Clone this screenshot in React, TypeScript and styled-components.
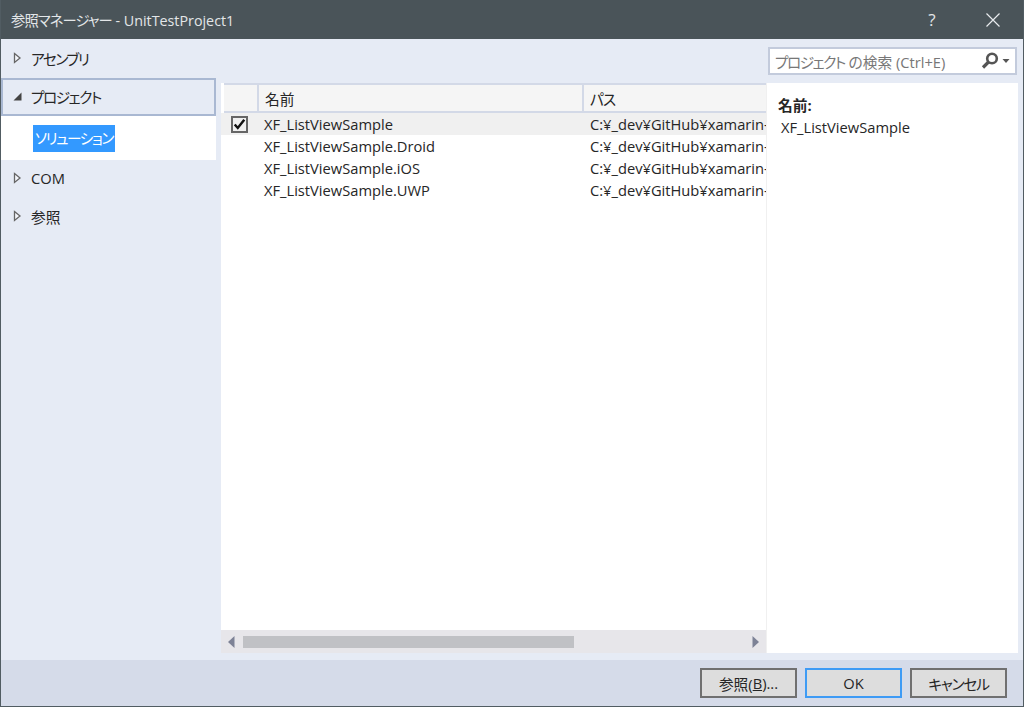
import React from "react";
import styled, { createGlobalStyle } from "styled-components";

const GlobalStyle = createGlobalStyle`
    html, body {
        margin: 0;
        padding: 0;
        height: 100%;
        overflow: hidden;
    }
    body {
        font-family: "Open Sans", "Noto Sans CJK JP", sans-serif;
        font-size: 14.7px;
        font-feature-settings: "palt";
        color: #262626;
    }
`;

const projects = ["XF_ListViewSample", "XF_ListViewSample.Droid", "XF_ListViewSample.iOS", "XF_ListViewSample.UWP"];
const PATH = "C:¥_dev¥GitHub¥xamarin-";

const Arrow = ({ open }: { open?: boolean }) => (
    <ArrowBox>
        {open ? (
            <svg width="10" height="10" viewBox="0 0 10 10"><path d="M9.5 1.5V9.5H1.5Z" fill="#444" /></svg>
        ) : (
            <svg width="10" height="12" viewBox="0 0 10 12"><path d="M2.5 1.5L8 6L2.5 10.5Z" fill="#f4f6fb" stroke="#666" strokeWidth="1.3" /></svg>
        )}
    </ArrowBox>
);

export default function App() {
    return <Win>
        <GlobalStyle />
        <TitleBar>
            <Title><Kana $s={-0.9}>参照マネージャー</Kana> - UnitTestProject1</Title>
            <Help>?</Help>
            <CloseBtn>
                <svg width="16" height="16" viewBox="0 0 16 16"><path d="M1.5 1.5L14.5 14.5M14.5 1.5L1.5 14.5" stroke="#e8ebee" strokeWidth="1.2" /></svg>
            </CloseBtn>
        </TitleBar>

        <Body>
            <Side>
                <SideItem><Arrow /><Kana>アセンブリ</Kana></SideItem>
                <SideItem $active><Arrow open /><Kana>プロジェクト</Kana></SideItem>
                <SubPanel><Selected><Kana>ソリューション</Kana></Selected></SubPanel>
                <SideItem><Arrow /><span>COM</span></SideItem>
                <SideItem><Arrow /><span>参照</span></SideItem>
            </Side>

            <Main>
                <SearchRow>
                    <SearchBox>
                        <SearchText><Kana>プロジェクト</Kana> の検索 (Ctrl+E)</SearchText>
                        <svg width="20" height="18" viewBox="0 0 20 18">
                            <circle cx="12" cy="6.5" r="4.8" fill="none" stroke="#555" strokeWidth="2.6" />
                            <path d="M8.5 10L3 15.5" stroke="#555" strokeWidth="3.2" />
                        </svg>
                        <svg width="9" height="6" viewBox="0 0 9 6"><path d="M0.5 1H7.5L4 5Z" fill="#555" /></svg>
                    </SearchBox>
                </SearchRow>

                <Content>
                    <ListPane>
                        <ListArea>
                            <HeaderRow>
                                <HeadCell $w={35} />
                                <HeadCell $w={325}>名前</HeadCell>
                                <HeadCell $w={183}><Kana $s={-0.8}>パス</Kana></HeadCell>
                            </HeaderRow>
                            {projects.map((name, i) => (
                                <Row key={name} $on={i === 0}>
                                    <CheckCell>
                                        {i === 0 && <Check>
                                            <svg width="15" height="13" viewBox="0 0 15 13"><path d="M2 6.5L5.5 10.5L13 1" fill="none" stroke="#111" strokeWidth="2.8" /></svg>
                                        </Check>}
                                    </CheckCell>
                                    <NameCell>{name}</NameCell>
                                    <PathCell>{PATH}</PathCell>
                                </Row>
                            ))}
                        </ListArea>
                        <ScrollBar>
                            <svg width="7" height="12" viewBox="0 0 7 12"><path d="M6.5 0V12L0 6Z" fill="#7d8296" /></svg>
                            <Track><Thumb /></Track>
                            <svg width="7" height="12" viewBox="0 0 7 12"><path d="M0.5 0V12L7 6Z" fill="#7d8296" /></svg>
                        </ScrollBar>
                    </ListPane>
                    <Detail>
                        <DetailLabel>名前:</DetailLabel>
                        <DetailValue>XF_ListViewSample</DetailValue>
                    </Detail>
                </Content>
            </Main>
        </Body>

        <Footer>
            <Btn>参照(<u>B</u>)...</Btn>
            <Btn $primary>OK</Btn>
            <Btn><Kana $s={-1.2}>キャンセル</Kana></Btn>
        </Footer>
    </Win>;
}

const Kana = styled.span<{ $s?: number }>`
    letter-spacing: ${p => p.$s ?? -1.5}px;
`;

const Win = styled.div`
    width: 1024px;
    height: 707px;
    box-sizing: border-box;
    display: flex;
    flex-direction: column;
    border: 1px solid #515c62;
    border-top: 0;
    background: #e6ebf5;
`;

const TitleBar = styled.div`
    height: 39px;
    flex: none;
    display: flex;
    align-items: center;
    background: #4a5459;
    color: #e3e6e8;
    padding-left: 10px;
`;

const Title = styled.div`
    flex: 1;
    font-size: 14.3px;
`;

const Help = styled.div`
    width: 30px;
    margin-right: 38px;
    text-align: center;
    font-size: 17px;
`;

const CloseBtn = styled.div`
    width: 16px;
    height: 16px;
    margin-right: 22px;
    line-height: 0;
`;

const Body = styled.div`
    flex: 1;
    display: flex;
    min-height: 0;
`;

const Side = styled.div`
    width: 215px;
    flex: none;
    padding-top: 1px;
`;

const SideItem = styled.div<{ $active?: boolean }>`
    height: 38px;
    box-sizing: border-box;
    display: flex;
    align-items: center;
    padding-left: ${p => (p.$active ? 9 : 11)}px;
    padding-bottom: 2px;
    border: ${p => (p.$active ? "2px solid #a9b8d2" : "0")};
`;

const ArrowBox = styled.div`
    width: 19px;
    display: flex;
    line-height: 0;
`;

const SubPanel = styled.div`
    height: 44px;
    background: #fff;
    display: flex;
    align-items: center;
    padding-left: 32px;
`;

const Selected = styled.div`
    background: #3399ff;
    color: #fff;
    height: 27px;
    line-height: 27px;
    padding: 0 2px;
`;

const Main = styled.div`
    flex: 1;
    display: flex;
    flex-direction: column;
    min-width: 0;
    padding: 8px 5px 7px 5px;
`;

const SearchRow = styled.div`
    display: flex;
    justify-content: flex-end;
    height: 36px;
    flex: none;
    padding-right: 1px;
`;

const SearchBox = styled.div`
    width: 249px;
    height: 28px;
    box-sizing: border-box;
    border: 2px solid #c3cbdc;
    background: #fff;
    display: flex;
    align-items: center;
    padding: 0 4px 0 5px;
    gap: 2px;
`;

const SearchText = styled.div`
    flex: 1;
    color: #777;
    white-space: nowrap;
`;

const Content = styled.div`
    flex: 1;
    display: flex;
    min-height: 0;
`;

const ListPane = styled.div`
    width: 545px;
    flex: none;
    display: flex;
    flex-direction: column;
    background: #fff;
`;

const ListArea = styled.div`
    flex: 1;
    overflow: hidden;
    min-height: 0;
`;

const HeaderRow = styled.div`
    display: flex;
    height: 30px;
    box-sizing: border-box;
    margin-left: 3px;
    background: #f5f5f5;
    border-top: 2px solid #d3d9e7;
    border-bottom: 2px solid #d3d9e7;
`;

const HeadCell = styled.div<{ $w: number }>`
    width: ${p => p.$w}px;
    flex: none;
    box-sizing: border-box;
    padding-left: 6px;
    line-height: 28px;
    border-right: 2px solid #d3d9e7;
    &:last-child { border-right: 0; flex: 1; }
`;

const Row = styled.div<{ $on?: boolean }>`
    display: flex;
    align-items: center;
    height: 22px;
    white-space: nowrap;
    background: ${p => (p.$on ? "#f0f0f0" : "#fff")};
`;

const CheckCell = styled.div`
    width: 43px;
    flex: none;
    padding-left: 10px;
    box-sizing: border-box;
`;

const Check = styled.div`
    width: 17px;
    height: 17px;
    box-sizing: border-box;
    border: 2px solid #666;
    display: flex;
    align-items: center;
    justify-content: center;
`;

const NameCell = styled.div`
    width: 326px;
    flex: none;
`;

const PathCell = styled.div`
    flex: 1;
    overflow: hidden;
`;

const ScrollBar = styled.div`
    height: 23px;
    flex: none;
    display: flex;
    align-items: center;
    padding: 0 7px;
    background: #e7e6ea;
`;

const Track = styled.div`
    flex: 1;
    padding: 0 8px;
`;

const Thumb = styled.div`
    width: 331px;
    height: 12px;
    background: #c0c1c5;
`;

const Detail = styled.div`
    flex: 1;
    background: #fff;
    padding: 12px 11px;
    border-left: 1px solid #f0f0f0;
`;

const DetailLabel = styled.div`
    font-weight: 700;
    line-height: 21px;
`;

const DetailValue = styled.div`
    line-height: 23px;
    margin-left: 3px;
`;

const Footer = styled.div`
    height: 46px;
    box-sizing: border-box;
    flex: none;
    display: flex;
    align-items: flex-start;
    justify-content: flex-end;
    gap: 8px;
    padding: 8px 16px 0 0;
    background: #d5dbe9;
`;

const Btn = styled.div<{ $primary?: boolean }>`
    width: 97px;
    height: 30px;
    box-sizing: border-box;
    display: flex;
    align-items: center;
    justify-content: center;
    background: #dddddd;
    border: 2px solid ${p => (p.$primary ? "#3e9bf5" : "#707070")};
`;
